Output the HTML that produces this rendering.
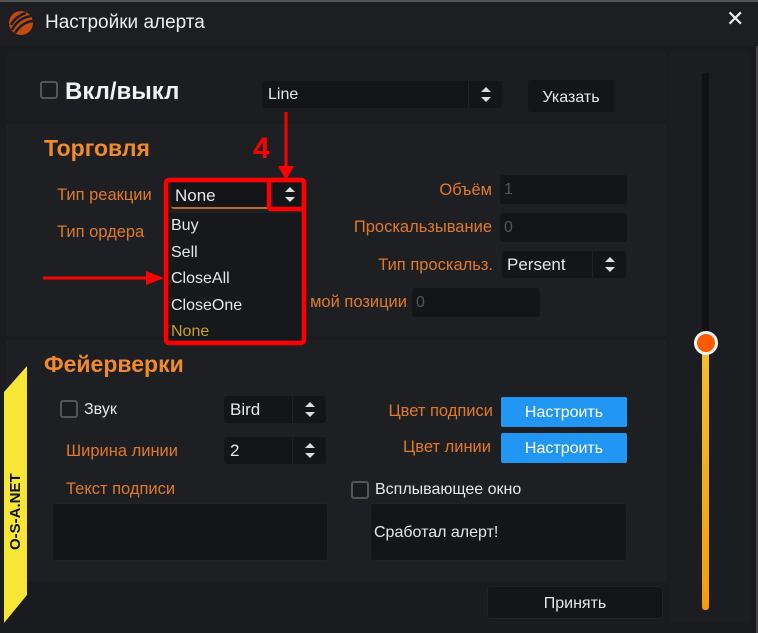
<!DOCTYPE html>
<html><head><meta charset="utf-8"><style>
*{margin:0;padding:0;box-sizing:border-box}
body{width:758px;height:633px;background:#1a1b1e;font-family:"Liberation Sans","DejaVu Sans",sans-serif;position:relative;overflow:hidden;color:#e8e8e8}
.a{position:absolute}
.title{left:0;top:0;width:758px;height:46px;background:#1d1e21;border-top:2px solid #555}
.panel{background:#1e1f23}
.inp{background:#141518;border-radius:3px}
.lbl{color:#e07a2a;font-size:16.5px}
.r{text-align:right;white-space:nowrap}
.h{color:#f08a2c;font-size:23px;font-weight:bold}
.spin{position:absolute;right:0;top:0;bottom:0;width:34px;border-left:1px solid #222}
.spin:before{content:"";position:absolute;left:12px;top:calc(50% - 8px);border:5px solid transparent;border-bottom:5px solid #ddd;border-top:0}
.spin:after{content:"";position:absolute;left:12px;top:calc(50% + 2px);border:5px solid transparent;border-top:5px solid #ddd;border-bottom:0}
.cb{width:18px;height:18px;border:2px solid #555;border-radius:3px;background:#1a1b1e}
.btn{background:#2196f3;color:#fff;font-size:16px;text-align:center;border-radius:2px}
</style></head><body>
<div class="a title"></div>
<svg class="a" style="left:6px;top:8px" width="30" height="30" viewBox="0 0 30 30"><circle cx="15" cy="15" r="12" fill="#c04a10"/><path d="M6 22 Q12 10 25 8 M9 25 Q16 14 27 13 M5 17 Q10 8 20 5" stroke="#1d1e21" stroke-width="2.5" fill="none"/></svg>
<div class="a" style="left:45px;top:12px;font-size:19px;color:#eee">Настройки алерта</div>
<div class="a" style="left:726px;top:6px;font-size:22px;color:#eee">✕</div>
<div class="a" style="left:756px;top:46px;width:2px;height:587px;background:#444"></div>

<div class="a panel" style="left:6px;top:52px;width:660px;height:68px;background:#1c1d20"></div>
<div class="a cb" style="left:40px;top:81px"></div>
<div class="a" style="left:65px;top:78px;font-size:24px;font-weight:bold;color:#f2f2f2">Вкл/выкл</div>
<div class="a inp" style="left:262px;top:81px;width:240px;height:27px"><span style="position:absolute;left:6px;top:5px;font-size:16px">Line</span><div class="spin"></div></div>
<div class="a inp" style="left:528px;top:80px;width:86px;height:32px;font-size:16px;text-align:center;line-height:36px">Указать</div>

<div class="a panel" style="left:6px;top:124px;width:660px;height:212px"></div>
<div class="a h" style="left:44px;top:135px">Торговля</div>
<div class="a lbl" style="left:57px;top:186px">Тип реакции</div>
<div class="a lbl" style="left:57px;top:223px">Тип ордера</div>
<div class="a inp" style="left:171px;top:182px;width:131px;height:27px;border-bottom:2px solid #c06a2a"><span style="position:absolute;left:4px;top:4px;font-size:17px">None</span><div class="spin" style="width:30px"></div></div>
<div class="a" style="left:168px;top:213px;width:134px;height:130px;background:#17181b;font-size:16px;line-height:26.5px;padding-left:3px">
<div>Buy</div><div>Sell</div><div>CloseAll</div><div>CloseOne</div><div style="color:#c8a030">None</div></div>
<div class="a lbl r" style="right:266px;top:181px">Объём</div>
<div class="a inp" style="left:500px;top:175px;width:127px;height:29px;color:#555;font-size:16px;padding:6px 4px">1</div>
<div class="a lbl r" style="right:266px;top:218px">Проскальзывание</div>
<div class="a inp" style="left:500px;top:213px;width:127px;height:29px;color:#555;font-size:16px;padding:6px 4px">0</div>
<div class="a lbl r" style="right:265px;top:256px">Тип проскальз.</div>
<div class="a inp" style="left:502px;top:251px;width:124px;height:27px"><span style="position:absolute;left:5px;top:4px;font-size:17px">Persent</span><div class="spin"></div></div>
<div class="a lbl r" style="right:351px;top:293px">мой позиции</div>
<div class="a inp" style="left:412px;top:288px;width:128px;height:29px;color:#555;font-size:16px;padding:6px 4px">0</div>

<div class="a panel" style="left:6px;top:340px;width:660px;height:242px"></div>
<div class="a h" style="left:44px;top:351px">Фейерверки</div>
<div class="a cb" style="left:60px;top:400px"></div>
<div class="a" style="left:84px;top:401px;font-size:16px">Звук</div>
<div class="a inp" style="left:224px;top:396px;width:102px;height:27px"><span style="position:absolute;left:6px;top:4px;font-size:17px">Bird</span><div class="spin"></div></div>
<div class="a lbl" style="left:66px;top:442px">Ширина линии</div>
<div class="a inp" style="left:224px;top:437px;width:102px;height:27px"><span style="position:absolute;left:6px;top:4px;font-size:17px">2</span><div class="spin"></div></div>
<div class="a lbl" style="left:66px;top:480px">Текст подписи</div>
<div class="a inp" style="left:52px;top:503px;width:276px;height:58px;border:1px solid #222"></div>
<div class="a lbl r" style="right:265px;top:402px">Цвет подписи</div>
<div class="a btn" style="left:501px;top:397px;width:126px;height:30px;line-height:32px">Настроить</div>
<div class="a lbl r" style="right:267px;top:438px">Цвет линии</div>
<div class="a btn" style="left:501px;top:433px;width:126px;height:30px;line-height:32px">Настроить</div>
<div class="a cb" style="left:351px;top:481px"></div>
<div class="a" style="left:375px;top:481px;font-size:16px">Всплывающее окно</div>
<div class="a inp" style="left:370px;top:503px;width:257px;height:58px;border:1px solid #222;font-size:16px;padding:20px 3px">Сработал алерт!</div>

<div class="a inp" style="left:487px;top:586px;width:176px;height:33px;border:1px solid #222;font-size:16px;text-align:center;line-height:33px">Принять</div>

<div class="a" style="left:670px;top:52px;width:80px;height:570px;background:#1c1d20"></div>
<div class="a" style="left:702px;top:73px;width:7px;height:270px;background:#111214"></div>
<div class="a" style="left:702px;top:345px;width:7px;height:265px;border-radius:3px;background:linear-gradient(#f0c030,#f59a10)"></div>
<div class="a" style="left:694px;top:331px;width:24px;height:24px;border-radius:50%;background:#ff5a00;border:3px solid #f4f4f4"></div>

<svg class="a" style="left:0;top:360px" width="30" height="273"><polygon points="27,6 27,235 4,263 4,32" fill="#f8e636"/><text x="0" y="0" transform="translate(20,190) rotate(-90)" font-family="Liberation Sans" font-weight="bold" font-size="15" fill="#111">O-S-A.NET</text></svg>

<svg class="a" style="left:0;top:0" width="758" height="633">
<rect x="166" y="180" width="138" height="163" rx="3" fill="none" stroke="#f00" stroke-width="4.5"/>
<rect x="269" y="180" width="35" height="29" rx="2" fill="none" stroke="#f00" stroke-width="4.5"/>
<line x1="286" y1="112" x2="286" y2="168" stroke="#f00" stroke-width="3"/>
<polygon points="278,166 294,166 286,180" fill="#f00"/>
<line x1="43" y1="278" x2="150" y2="278" stroke="#f00" stroke-width="3"/>
<polygon points="146,271 146,285 164,278" fill="#f00"/>
<text x="253" y="158" font-family="Liberation Sans" font-weight="bold" font-size="30" fill="#f00">4</text>
</svg>
</body></html>
